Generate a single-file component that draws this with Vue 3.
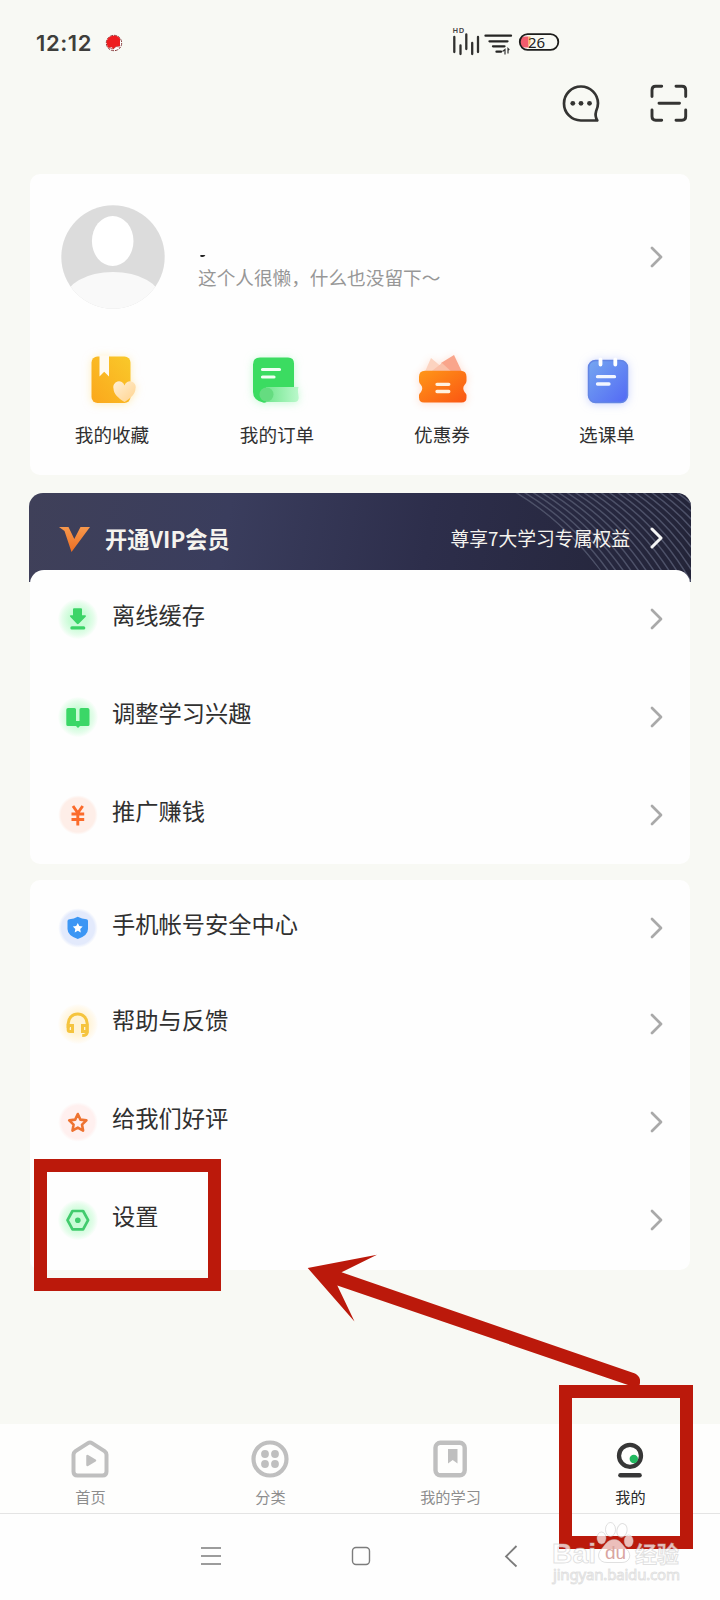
<script setup>
const shortcuts = [
  { id: 'fav', label: '我的收藏' },
  { id: 'order', label: '我的订单' },
  { id: 'coupon', label: '优惠券' },
  { id: 'course', label: '选课单' },
]
const learning = [
  { id: 'download', label: '离线缓存', tone: 'green' },
  { id: 'book', label: '调整学习兴趣', tone: 'green' },
  { id: 'money', label: '推广赚钱', tone: 'orange' },
]
const support = [
  { id: 'shield', label: '手机帐号安全中心', tone: 'blue' },
  { id: 'headset', label: '帮助与反馈', tone: 'yellow' },
  { id: 'star', label: '给我们好评', tone: 'pink' },
  { id: 'settings', label: '设置', tone: 'green' },
]
const groups = [
  { id: 'learning', rows: learning },
  { id: 'support', rows: support },
]
const tabs = [
  { id: 'home', label: '首页' },
  { id: 'category', label: '分类' },
  { id: 'study', label: '我的学习' },
  { id: 'mine', label: '我的', active: true },
]
</script>

<template>
  <div class="page">
    <header class="status">
      <span class="time">12:12</span>
      <svg class="rec" width="18" height="18" viewBox="0 0 18 18">
        <circle cx="9" cy="9" r="7.700" fill="#fff" stroke="#7c2a2a" stroke-width=".9" stroke-dasharray="3 1" />
        <path d="M1.500 9A7.500 7.500 0 0 1 15 4.500V12l-4 .5-3 3-1-2.300-4 .5Z" fill="#ee1c1f" />
        <path d="M4 13.500 8 15l3-2.500 4 .5" fill="none" stroke="#a33" stroke-width=".7" />
      </svg>
      <svg class="signals" width="110" height="32" viewBox="0 0 110 32">
        <text x="2.500" y="7.800" class="hd">HD</text>
        <path d="M4.300 12V27M10.500 20.500v8.500M16.300 9.500v14.500M22.200 18v11M28 12V27" stroke="#30302e" stroke-width="2.300" stroke-linecap="round" />
        <path d="M35.500 10.700H61M39.500 16.300H57.500M43 21.300H54.500M46.500 26.700H51" stroke="#252523" stroke-width="2.300" stroke-linecap="round" />
        <path d="M52.500 26.500l2.500-2v5M58 28.500v-5l1.300 1.500" fill="none" stroke="#333" stroke-width="1.200" />
        <path d="M78.500 11.500h-3.500a5.500 5.500 0 0 0 0 11H78.500z" fill="#f25c6d" />
        <path d="M78.500 11.500h2v6l-2 4z" fill="#f7b25a" />
        <rect x="69.800" y="9.200" width="38.500" height="15.600" rx="7.800" fill="none" stroke="#1d1d1b" stroke-width="1.800" />
        <text x="78" y="22.700" class="battery">26</text>
      </svg>
    </header>

    <div class="toolbar">
      <svg width="40" height="40" viewBox="0 0 40 40" fill="none" stroke="#343432" stroke-width="2.700">
        <path d="M36.300 37.500H19.800A17 17 0 1 1 37 20.300c0 3.500-.8 5.500-1.900 8-.8 2.500-.3 6.500 1.200 9.200Z" stroke-linejoin="round" />
        <g fill="#343432" stroke="none"><circle cx="11.800" cy="20.300" r="2.400" /><circle cx="20" cy="20.300" r="2.400" /><circle cx="28.500" cy="20.300" r="2.400" /></g>
      </svg>
      <svg width="40" height="40" viewBox="0 0 40 40" fill="none" stroke="#343432" stroke-width="2.900" stroke-linecap="round">
        <path d="M3 13.500V7q0-3.700 3.700-3.700h6M27 3.300h6q3.700 0 3.700 3.700v6.500M36.700 27v6.500q0 3.700-3.700 3.700h-6M12.700 37.200h-6Q3 37.200 3 33.500V27M10 20.300H30.500" />
      </svg>
    </div>

    <section class="card profile">
      <div class="person">
        <svg class="avatar" width="104" height="106" viewBox="0 0 104 106">
          <defs><clipPath id="face"><circle cx="52" cy="52" r="51.700" /></clipPath></defs>
          <g clip-path="url(#face)">
            <rect width="104" height="106" fill="#dcdcdc" />
            <ellipse cx="51.700" cy="36" rx="20.800" ry="25" fill="#fff" />
            <ellipse cx="52" cy="94" rx="48" ry="27" fill="#f9f9f9" />
          </g>
        </svg>
        <div class="bio">
          <span class="name"></span>
          <p>这个人很懒，什么也没留下～</p>
        </div>
        <svg class="chev" width="14" height="24" viewBox="0 0 14 24"><path d="M3 3l9 9-9 9" /></svg>
      </div>
      <div class="shortcuts">
        <div v-for="s in shortcuts" :key="s.id" class="shortcut">
          <svg width="60" height="60" viewBox="0 0 60 60" :class="'glow-' + s.id">
            <template v-if="s.id === 'fav'">
              <defs>
                <linearGradient id="gf" x1="1" y1="0" x2="0" y2="1"><stop stop-color="#f9c92a" /><stop offset="1" stop-color="#fba71c" /></linearGradient>
                <linearGradient id="gh" x1="0" y1="0" x2="1" y2="1"><stop stop-color="#fff0d5" /><stop offset="1" stop-color="#ffd28c" /></linearGradient>
              </defs>
              <rect x="8.500" y="6.500" width="39" height="46.500" rx="6" fill="url(#gf)" />
              <path d="M16.500 5.500h9.500v21l-4.800-4.700-4.700 4.700z" fill="#fffaf0" />
              <path d="M41.500 52C35 48 30.500 43.500 30.500 38.500a5.700 5.700 0 0 1 11-3A5.700 5.700 0 0 1 52.500 38.500c0 5-4.500 9.500-11 13.500Z" fill="url(#gh)" />
            </template>
            <template v-else-if="s.id === 'order'">
              <defs><linearGradient id="go"><stop stop-color="#72e68e" /><stop offset="1" stop-color="#baf8cb" /></linearGradient></defs>
              <path d="M12 7.500h28q6 0 6 6v32H22q-2 8.500-7 7Q5 50 5 42V14.500q0-7 7-7Z" fill="#3bdc61" />
              <path d="M14.500 19.500h17M14.500 27h11.500" stroke="#f2fff4" stroke-width="3.200" stroke-linecap="round" />
              <path d="M18 37h32.500c-2 6 2 10-1 14-1 1.200-3 1-5 1H18Z" fill="url(#go)" />
              <circle cx="18.500" cy="44.500" r="7" fill="#65dc80" />
            </template>
            <template v-else-if="s.id === 'coupon'">
              <defs><linearGradient id="gc" x1="0" y1="0" x2="1" y2="1"><stop stop-color="#ff9718" /><stop offset="1" stop-color="#fa5513" /></linearGradient></defs>
              <path d="M11 24 18 8l19 16Z" fill="#fcd3c0" /><path d="M28 13 41 5l9 19H35Z" fill="#f9a58b" /><path d="M15 24l14-11 12 11Z" fill="#fac0a8" />
              <path d="M12 20.700H47.500q6 0 6 6V31q0 2-2 4-2.500 3 0 7 2 2 2 3v2.500q0 5-5 5H11q-5 0-5-5V45q0-1 2-3 2.500-4 0-7-2-2-2-4v-4.300q0-6 6-6Z" fill="url(#gc)" />
              <path d="M24 34.300H35.800M24 41.500H35.800" stroke="#fff1df" stroke-width="3.300" stroke-linecap="round" />
            </template>
            <template v-else>
              <defs><linearGradient id="gb" x1="0" y1="0" x2="1" y2="1"><stop stop-color="#75a7f0" /><stop offset="1" stop-color="#5369f5" /></linearGradient></defs>
              <rect x="10.500" y="10.500" width="39" height="42" rx="7" fill="url(#gb)" stroke="#6385e4" stroke-width="1.500" />
              <path d="M22.500 9.500v5M37.300 9.500v5" stroke="#fff" stroke-width="3.800" stroke-linecap="round" />
              <path d="M19.500 26.700h17M19.500 34h11.500" stroke="#f3f6ff" stroke-width="3.300" stroke-linecap="round" />
            </template>
          </svg>
          <span>{{ s.label }}</span>
        </div>
      </div>
    </section>

    <section class="vip">
      <svg class="stripes" width="220" height="89" viewBox="0 0 220 89">
        <defs><clipPath id="fan"><path d="M42 0H220V89H139C112 58 90 26 42 0Z" /></clipPath></defs>
        <g clip-path="url(#fan)" stroke="#4d5168" stroke-width="1.500" fill="none">
          <path v-for="n in 22" :key="n" :d="`M${34 + n * 8.500} -2 Q${92 + n * 8} 32 ${132 + n * 7.500} 92`" />
        </g>
      </svg>
      <svg class="vee" width="32" height="27" viewBox="0 0 32 27">
        <defs><linearGradient id="gv" x1="0" y1="0" x2="0" y2="1"><stop stop-color="#f7984c" /><stop offset="1" stop-color="#ed6e23" /></linearGradient></defs>
        <path d="M0 1h9.500L15.300 13 21.500 1H31L12.500 26 5.500 5Z" fill="url(#gv)" />
      </svg>
      <b>开通VIP会员</b>
      <span>尊享7大学习专属权益</span>
      <svg class="chev light" width="14" height="24" viewBox="0 0 14 24"><path d="M2 3l9 9-9 9" /></svg>
    </section>

    <section v-for="g in groups" :key="g.id" class="card list" :class="g.id">
      <div v-for="r in g.rows" :key="r.id" class="row">
        <span class="badge" :class="r.tone">
          <svg width="28" height="28" viewBox="0 0 28 28">
            <g v-if="r.id === 'download'" fill="#3cd467"><path d="M9 4.200q0-1 1-1h7q1 0 1 1v6h3.200q1.300.3.500 1.500l-7 7q-.9.900-1.800 0l-6.700-7q-.9-1.200.5-1.500H9z" /><rect x="6.300" y="21.300" width="15" height="3.200" rx="1.600" /></g>
            <path v-else-if="r.id === 'book'" d="M4 5h6.500Q12 5 12 6.500v11.500h3.500V6.500Q15.500 5 17 5h6.500q2 0 2 2V21.500q0 1.500-1.500 1.500h-8l-2 2-2-2H4q-1.700 0-1.700-1.500V6.700Q2.300 5 4 5Z" fill="#3bd767" />
            <path v-else-if="r.id === 'money'" d="M9 5l4.800 7 4.900-7M13.800 12v12.500M7.500 13h12.700M7.500 18.500h12.700" fill="none" stroke="#fb6b2b" stroke-width="2.900" />
            <g v-else-if="r.id === 'shield'"><path d="M5.500 5.300Q10 4.800 13.700 2.800 18 4.800 22.500 5.300q1.500.2 1.500 1.700v8q0 6.500-10.200 10Q3.500 21.500 3.500 15V7q0-1.500 2-1.700Z" fill="#3c96f4" /><path d="M13.800 9l1.500 3.100 3.400.5-2.500 2.400.6 3.400-3-1.600-3.100 1.600.6-3.400-2.500-2.400 3.400-.5z" fill="#fff" /></g>
            <g v-else-if="r.id === 'headset'" fill="none" stroke="#f5c43e" stroke-width="3"><path d="M4.200 18v-4.500a9.500 9.500 0 0 1 19 0v8.500q0 3.500-5 3.500" /><path d="M4.200 15.500h4.300v6H6q-1.800 0-1.800-1.500zM18.500 15.500h4.500v6h-4.500z" /></g>
            <path v-else-if="r.id === 'star'" d="M13.800 6l2.600 5.600 6 .8-4.400 4.200 1.100 6-5.300-3-5.300 3 1.100-6-4.400-4.200 6-.8z" fill="none" stroke="#ee7331" stroke-width="2.600" stroke-linejoin="round" />
            <g v-else><path d="M8.500 5h10.600l5 9.200-5 9.200H8.500l-5-9.200z" fill="none" stroke="#42cb6d" stroke-width="2.700" stroke-linejoin="round" /><circle cx="13.800" cy="14.200" r="2.800" fill="#42cb6d" /></g>
          </svg>
        </span>
        <span class="label">{{ r.label }}</span>
        <svg class="chev" width="14" height="24" viewBox="0 0 14 24"><path d="M3 3l9 9-9 9" /></svg>
      </div>
    </section>

    <nav class="tabs">
      <div v-for="t in tabs" :key="t.id" class="tab" :class="{ active: t.active }">
        <svg width="40" height="40" viewBox="0 0 40 40" fill="none" stroke="#bfbfbf" stroke-width="4">
          <g v-if="t.id === 'home'"><path d="M20 3.500q1 0 2 .6l12.500 8q2 1.400 2 3.700V32.500q0 4-4 4h-25q-4 0-4-4V15.800q0-2.300 2-3.700l12.500-8q1-.6 2-.6Z" /><path d="M17.500 17v9l7.500-4.500z" fill="#bfbfbf" stroke-width="2.500" stroke-linejoin="round" /></g>
          <g v-else-if="t.id === 'category'"><circle cx="20" cy="20" r="16.500" stroke-width="4.200" /><g fill="#bfbfbf" stroke="none"><circle cx="15" cy="15" r="3.900" /><circle cx="25" cy="15" r="3.900" /><circle cx="15" cy="25" r="3.900" /><circle cx="25" cy="25" r="3.900" /></g></g>
          <g v-else-if="t.id === 'study'"><rect x="5.500" y="3.800" width="29.200" height="32.500" rx="5" stroke-width="4.400" /><path d="M18 10h9.500v14.500L22.700 21 18 24.500z" fill="#bfbfbf" stroke="none" /></g>
          <g v-else stroke="#373737"><circle cx="20" cy="16.800" r="11" stroke-width="4.300" /><circle cx="23.800" cy="20" r="4.200" fill="#22b960" stroke="none" /><path d="M10.500 36.300h19" stroke-width="4.600" stroke-linecap="round" /></g>
        </svg>
        <span>{{ t.label }}</span>
      </div>
    </nav>

    <footer class="system">
      <svg width="24" height="24" viewBox="0 0 24 24"><path d="M2 4h20M2 12h20M2 20h20" stroke-width="1.700" /></svg>
      <svg width="24" height="24" viewBox="0 0 24 24"><rect x="3.500" y="3.500" width="17" height="17" rx="3.500" stroke-width="1.400" /></svg>
      <svg width="24" height="24" viewBox="0 0 24 24"><path d="M17.500 2 7 12.500l10.500 10" stroke-width="1.800" /></svg>
    </footer>

    <div class="mark mark-settings"></div>
    <div class="mark mark-mine"></div>
    <svg class="arrow" width="340" height="135" viewBox="300 1250 340 135">
      <path d="M307.700 1268 377 1254.700 341.500 1272.300 635 1373.500Q642 1377.500 639.500 1385H628L337.300 1285.500 354.500 1321.500Z" fill="#bb190b" />
    </svg>
    <svg class="watermark" width="140" height="70" viewBox="545 1520 140 70">
      <g class="wm">
        <text x="552" y="1562.500" class="wm-big" textLength="44" lengthAdjust="spacingAndGlyphs">Bai</text>
        <ellipse cx="601.500" cy="1538" rx="4.500" ry="6" /><ellipse cx="610.500" cy="1529.500" rx="5" ry="7" /><ellipse cx="622" cy="1530.500" rx="5" ry="7" transform="rotate(12 622 1530.500)" /><ellipse cx="628.700" cy="1541" rx="4.500" ry="6" />
        <path d="M614.500 1539.500c6 0 8 6 12.500 10 5 5 3 13-5 13h-15c-8 0-11-7-6-13 4-4 6-10 13.500-10Z" />
        <text x="635" y="1561.500" class="wm-cn">经验</text>
        <text x="553" y="1579.500" class="wm-url" textLength="127">jingyan.baidu.com</text>
      </g>
      <text x="605" y="1559" class="wm-du">du</text>
    </svg>
  </div>
</template>

<style>
body { margin: 0; }
</style>

<style scoped>
.page {
  position: relative;
  display: flex;
  flex-direction: column;
  width: 720px;
  height: 1600px;
  overflow: hidden;
  background: #f8f9f4;
  color: #303030;
  font-family: "Noto Sans CJK SC", sans-serif;
}
svg { display: block; flex: none; }
.status { display: flex; align-items: center; height: 72px; padding: 13px 0 0 36px; box-sizing: border-box; }
.time { width: 69px; font: 600 22px/30px Inter, sans-serif; letter-spacing: .6px; color: #3e3e3b; }
.signals { margin: -4px 0 0 327px; }
.hd { font: 600 7.500px "Noto Sans", sans-serif; fill: #444; letter-spacing: .6px; }
.battery { font: 400 15px "Noto Sans", sans-serif; fill: #222; }
.toolbar { display: flex; justify-content: flex-end; gap: 48px; height: 102px; padding: 11px 31px 0 0; box-sizing: border-box; }
.card { margin: 0 30px; background: #fefefe; border-radius: 10px; }
.profile { height: 301px; }
.person { display: flex; align-items: center; height: 166px; padding: 0 27px 0 32px; }
.avatar { margin: 2px 0 0 -1px; }
.bio { flex: 1; margin-left: 33px; padding-top: 34px; }
.name { display: block; width: 5px; height: 2px; margin: 0 0 4px 2px; border-radius: 0 0 2px 2px; background: #222; transform: skewX(-20deg); }
.bio p { margin: 0; font-size: 18.650px; line-height: 32px; font-weight: 400; color: #979797; white-space: nowrap; }
.chev { fill: none; stroke: #a9a9a9; stroke-width: 2.700; stroke-linecap: round; stroke-linejoin: round; }
.light { stroke: #f6f6f6; stroke-width: 3; }
.shortcuts { display: grid; grid-template-columns: repeat(4, 1fr); padding-top: 10px; }
.shortcut { display: flex; flex-direction: column; align-items: center; font-size: 18.600px; line-height: 28px; }
.shortcut span { margin: 10px 1px 0 0; }
.glow-fav { filter: drop-shadow(0 1px 4px #ffdf8990); }
.glow-order { filter: drop-shadow(0 1px 4px #9df7b790); }
.glow-coupon { filter: drop-shadow(0 1px 4px #ffb49370); }
.glow-course { filter: drop-shadow(0 1px 4px #97a9ff80); }
.vip {
  position: relative;
  display: flex;
  align-items: center;
  height: 89px;
  margin: 18px 29px 0;
  padding: 0 27px 0 30px;
  box-sizing: border-box;
  border-radius: 14px 14px 0 0;
  overflow: hidden;
  background: linear-gradient(100deg, #3f4059, #3a3d5d 30%, #2d2e4b 60%, #232438);
  color: #f5f3ee;
}
.stripes { position: absolute; top: 0; right: 0; }
.vee { margin-top: 3px; }
.vip b { flex: 1; margin-left: 14px; font-size: 22.200px; font-weight: 700; line-height: 30px; }
.vip span { z-index: 1; margin-right: 20px; font-size: 18.800px; }
.light { z-index: 1; }
.learning { position: relative; margin-top: -12px; border-radius: 14px 14px 10px 10px; }
.support { margin-top: 16px; height: 390px; }
.support .row:first-child { height: 95px; }
.row { display: flex; align-items: center; height: 98px; padding: 0 27px 0 28px; box-sizing: border-box; }
.badge { display: flex; align-items: center; justify-content: center; width: 40px; height: 40px; border-radius: 50%; }
.green { background: radial-gradient(circle, #cafcd7 0 32%, #e5fdeb 56%, #fff0 72%); }
.orange { background: radial-gradient(circle, #feeee8 0 60%, #fff0 70%); }
.blue { background: radial-gradient(circle, #e3eafc 0 58%, #fff0 70%); }
.yellow { background: radial-gradient(circle, #fff3d5 0 36%, #fffaf0 62%, #fff0 72%); }
.pink { background: radial-gradient(circle, #fff0ef 0 58%, #fff0 70%); }
.label { flex: 1; margin: -10px 0 0 14px; font-size: 23.250px; font-weight: 400; line-height: 34px; }
.tabs { display: grid; grid-template-columns: repeat(4, 1fr); height: 90px; margin-top: auto; border-bottom: 1px solid #e4e4e4; box-sizing: border-box; background: #fefefd; }
.tab { display: flex; flex-direction: column; align-items: center; padding-top: 15px; font-size: 15.200px; line-height: 22px; color: #8d8d8d; }
.tab span { margin: 6px 0 0 1px; }
.active { color: #292929; }
.system { display: flex; justify-content: center; gap: 126px; height: 86px; padding: 30px 0 0 2px; box-sizing: border-box; background: #fefefe; }
.system svg { fill: none; stroke: #7c7c7c; }
.mark { position: absolute; box-sizing: border-box; border: 13px solid #bb190b; }
.mark-settings { left: 34px; top: 1159px; width: 187px; height: 132px; }
.mark-mine { left: 559px; top: 1385px; width: 134px; height: 164px; }
.arrow { position: absolute; left: 300px; top: 1250px; }
.watermark { position: absolute; left: 545px; top: 1520px; }
.wm { fill: #ffffffb8; stroke: #bbbbbb70; stroke-width: 1px; }
.wm-big { font: 700 28px "Liberation Sans", sans-serif; }
.wm-cn { font: 700 22px "Noto Sans CJK SC", sans-serif; }
.wm-url { font: 400 15px "Noto Sans", sans-serif; }
.wm-du { font: 400 19px "Liberation Sans", sans-serif; fill: #d9a5a1; }
</style>
